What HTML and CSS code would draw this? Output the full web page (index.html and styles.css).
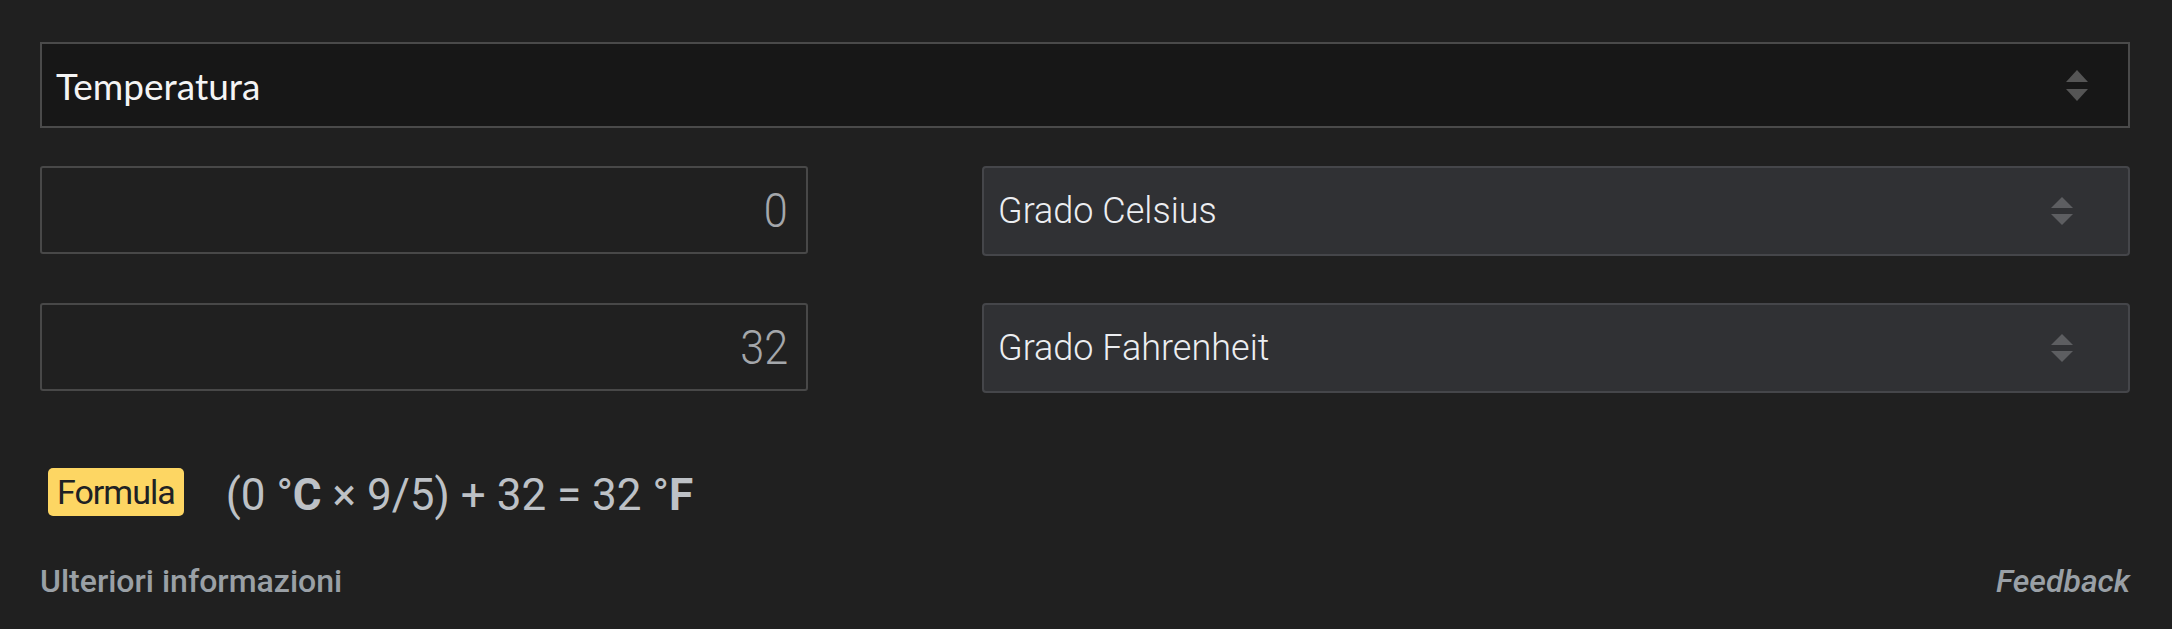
FILE: index.html
```html
<!DOCTYPE html>
<html lang="it">
<head>
<meta charset="utf-8">
<title>Convertitore di unità</title>
<link rel="stylesheet" href="styles.css">
</head>
<body>
<div class="page">
  <div class="category">
    <span class="category-label">Temperatura</span>
    <svg class="updown updown-lg" viewBox="0 0 22 35" aria-hidden="true"><polygon points="0,14 11,2 22,14"/><polygon points="0,21 11,33 22,21"/></svg>
  </div>

  <div class="rows">
    <div class="num-input"><span class="num-value">0</span></div>
    <div class="unit-select">
      <span class="unit-label">Grado Celsius</span>
      <svg class="updown updown-sm" viewBox="0 0 22 32" aria-hidden="true"><polygon points="0,13 11,2 22,13"/><polygon points="0,19 11,30 22,19"/></svg>
    </div>
    <div class="num-input"><span class="num-value">32</span></div>
    <div class="unit-select">
      <span class="unit-label">Grado Fahrenheit</span>
      <svg class="updown updown-sm" viewBox="0 0 22 32" aria-hidden="true"><polygon points="0,13 11,2 22,13"/><polygon points="0,19 11,30 22,19"/></svg>
    </div>
  </div>

  <div class="formula-row">
    <span class="badge">Formula</span>
    <span class="equation">(0 °<b>C</b> × 9/5) + 32 = 32 °<b>F</b></span>
  </div>

  <div class="links">
    <span class="more">Ulteriori informazioni</span>
    <span class="feedback">Feedback</span>
  </div>
</div>
</body>
</html>
```

FILE: styles.css
```css
html, body {
  margin: 0;
  padding: 0;
  background: #202020;
}

body {
  font-family: Roboto, "Liberation Sans", sans-serif;
  width: 2172px;
  height: 629px;
  overflow: hidden;
}

.page {
  padding: 42px 42px 0 40px;
}

.category {
  box-sizing: border-box;
  height: 86px;
  border: 2px solid #4a4a4a;
  background: #171717;
  display: flex;
  align-items: center;
  justify-content: space-between;
  padding: 0 40px 0 14px;
}

.category-label {
  font-family: Lato, "Open Sans", sans-serif;
  font-size: 37px;
  color: #f4f4f4;
}

.updown {
  display: block;
  flex: none;
}

.updown-lg {
  width: 22px;
  height: 35px;
  fill: #555555;
}

.updown-sm {
  width: 22px;
  height: 32px;
  fill: #5d5e61;
}

.rows {
  margin-top: 38px;
  display: grid;
  grid-template-columns: 768px 1fr;
  column-gap: 174px;
  row-gap: 47px;
  align-items: start;
}

.num-input {
  box-sizing: border-box;
  height: 88px;
  border: 2px solid #484848;
  border-radius: 3px;
  background: #202020;
  display: flex;
  align-items: center;
  justify-content: flex-end;
  padding: 0 18px;
}

.num-value {
  font-size: 48px;
  font-weight: 300;
  color: #a4a7ab;
  display: inline-block;
  transform: scaleX(0.9);
  transform-origin: right center;
}

.unit-select {
  box-sizing: border-box;
  height: 90px;
  border: 2px solid #45464a;
  border-radius: 4px;
  background: #303134;
  display: flex;
  align-items: center;
  justify-content: space-between;
  padding: 0 55px 0 14px;
}

.unit-label {
  font-size: 36px;
  font-weight: 300;
  color: #eceef1;
}

.formula-row {
  margin-top: 75px;
  display: flex;
  align-items: flex-start;
  padding-left: 8px;
}

.badge {
  box-sizing: border-box;
  height: 48px;
  padding: 0 9px;
  background: #fdd663;
  border-radius: 5px;
  font-size: 34px;
  line-height: 48px;
  letter-spacing: -1px;
  color: #202124;
}

.equation {
  margin-left: 42px;
  margin-top: 3px;
  font-size: 44px;
  line-height: 48px;
  color: #bdc1c6;
}

.equation b {
  font-weight: 700;
}

.links {
  margin-top: 42px;
  display: flex;
  justify-content: space-between;
  font-size: 32px;
  line-height: 40px;
  font-weight: 500;
  color: #9aa0a6;
}

.feedback {
  font-style: italic;
}
```
